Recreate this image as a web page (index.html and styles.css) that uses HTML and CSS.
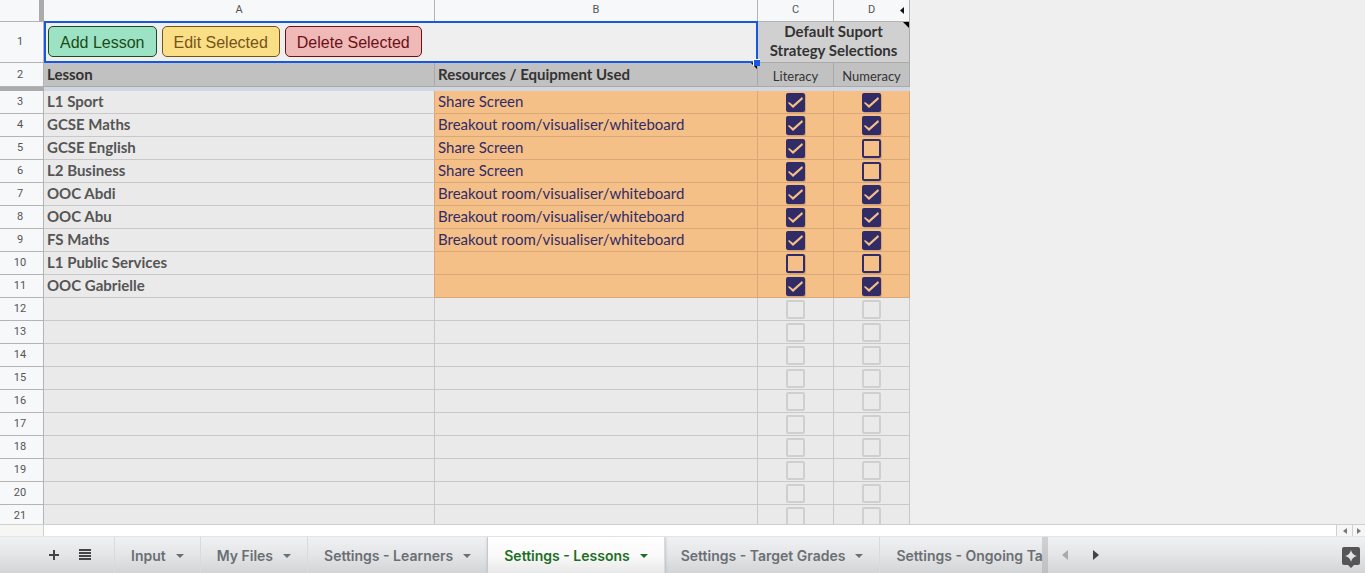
FILE: index.html
```
<!DOCTYPE html>
<html lang="en">
<head>
<meta charset="utf-8">
<title>Settings - Lessons</title>
<link rel="stylesheet" href="styles.css">
</head>
<body>
<main class="grid">
<table class="sheet">
<colgroup><col class="col-num"><col class="col-a"><col class="col-b"><col class="col-check"><col class="col-check"></colgroup>
<thead>
<tr class="letters"><td class="corner"></td><th scope="col">A</th><th scope="col">B</th><th scope="col">C</th><th scope="col" class="last-letter">D<svg class="collapse" viewBox="0 0 4 7" aria-hidden="true"><path d="M4 0v7L0 3.500z"/></svg></th></tr>
<tr class="toolbar-row"><th scope="row" class="num">1</th>
<td colspan="2" class="selected"><div class="actions"><button type="button" class="btn add">Add Lesson</button><button type="button" class="btn edit">Edit Selected</button><button type="button" class="btn delete">Delete Selected</button></div><span class="handle"></span></td>
<th colspan="2" class="strategy note">Default Suport<br>Strategy Selections</th></tr>
<tr class="headings"><th scope="row" class="num">2</th><th>Lesson</th><th class="note">Resources / Equipment Used</th><th class="sub">Literacy</th><th class="sub">Numeracy</th></tr>
<tr class="freeze"><td class="freeze-num"></td><td colspan="4" class="freeze-line"></td></tr>
</thead>
<tbody class="filled">
<tr><th scope="row" class="num">3</th><td>L1 Sport</td><td>Share Screen</td><td><input type="checkbox" aria-label="L1 Sport literacy" checked></td><td><input type="checkbox" aria-label="L1 Sport numeracy" checked></td></tr>
<tr><th scope="row" class="num">4</th><td>GCSE Maths</td><td>Breakout room/visualiser/whiteboard</td><td><input type="checkbox" aria-label="GCSE Maths literacy" checked></td><td><input type="checkbox" aria-label="GCSE Maths numeracy" checked></td></tr>
<tr><th scope="row" class="num">5</th><td>GCSE English</td><td>Share Screen</td><td><input type="checkbox" aria-label="GCSE English literacy" checked></td><td><input type="checkbox" aria-label="GCSE English numeracy"></td></tr>
<tr><th scope="row" class="num">6</th><td>L2 Business</td><td>Share Screen</td><td><input type="checkbox" aria-label="L2 Business literacy" checked></td><td><input type="checkbox" aria-label="L2 Business numeracy"></td></tr>
<tr><th scope="row" class="num">7</th><td>OOC Abdi</td><td>Breakout room/visualiser/whiteboard</td><td><input type="checkbox" aria-label="OOC Abdi literacy" checked></td><td><input type="checkbox" aria-label="OOC Abdi numeracy" checked></td></tr>
<tr><th scope="row" class="num">8</th><td>OOC Abu</td><td>Breakout room/visualiser/whiteboard</td><td><input type="checkbox" aria-label="OOC Abu literacy" checked></td><td><input type="checkbox" aria-label="OOC Abu numeracy" checked></td></tr>
<tr><th scope="row" class="num">9</th><td>FS Maths</td><td>Breakout room/visualiser/whiteboard</td><td><input type="checkbox" aria-label="FS Maths literacy" checked></td><td><input type="checkbox" aria-label="FS Maths numeracy" checked></td></tr>
<tr><th scope="row" class="num">10</th><td>L1 Public Services</td><td></td><td><input type="checkbox" aria-label="L1 Public Services literacy"></td><td><input type="checkbox" aria-label="L1 Public Services numeracy"></td></tr>
<tr><th scope="row" class="num">11</th><td>OOC Gabrielle</td><td></td><td><input type="checkbox" aria-label="OOC Gabrielle literacy" checked></td><td><input type="checkbox" aria-label="OOC Gabrielle numeracy" checked></td></tr>
</tbody>
<tbody class="empty">
<tr><th scope="row" class="num">12</th><td></td><td></td><td><input type="checkbox" aria-label="Row 12 literacy"></td><td><input type="checkbox" aria-label="Row 12 numeracy"></td></tr>
<tr><th scope="row" class="num">13</th><td></td><td></td><td><input type="checkbox" aria-label="Row 13 literacy"></td><td><input type="checkbox" aria-label="Row 13 numeracy"></td></tr>
<tr><th scope="row" class="num">14</th><td></td><td></td><td><input type="checkbox" aria-label="Row 14 literacy"></td><td><input type="checkbox" aria-label="Row 14 numeracy"></td></tr>
<tr><th scope="row" class="num">15</th><td></td><td></td><td><input type="checkbox" aria-label="Row 15 literacy"></td><td><input type="checkbox" aria-label="Row 15 numeracy"></td></tr>
<tr><th scope="row" class="num">16</th><td></td><td></td><td><input type="checkbox" aria-label="Row 16 literacy"></td><td><input type="checkbox" aria-label="Row 16 numeracy"></td></tr>
<tr><th scope="row" class="num">17</th><td></td><td></td><td><input type="checkbox" aria-label="Row 17 literacy"></td><td><input type="checkbox" aria-label="Row 17 numeracy"></td></tr>
<tr><th scope="row" class="num">18</th><td></td><td></td><td><input type="checkbox" aria-label="Row 18 literacy"></td><td><input type="checkbox" aria-label="Row 18 numeracy"></td></tr>
<tr><th scope="row" class="num">19</th><td></td><td></td><td><input type="checkbox" aria-label="Row 19 literacy"></td><td><input type="checkbox" aria-label="Row 19 numeracy"></td></tr>
<tr><th scope="row" class="num">20</th><td></td><td></td><td><input type="checkbox" aria-label="Row 20 literacy"></td><td><input type="checkbox" aria-label="Row 20 numeracy"></td></tr>
<tr><th scope="row" class="num">21</th><td></td><td></td><td><input type="checkbox" aria-label="Row 21 literacy"></td><td><input type="checkbox" aria-label="Row 21 numeracy"></td></tr>
</tbody>
</table>
</main>
<div class="hscroll">
<span class="hscroll-corner"></span><span class="track"></span>
<button type="button" class="step" aria-label="Scroll left"><svg width="4" height="6" viewBox="0 0 4 6"><path d="M4 0v6L0 3z"/></svg></button>
<button type="button" class="step" aria-label="Scroll right"><svg width="4" height="6" viewBox="0 0 4 6"><path d="M0 0v6L4 3z"/></svg></button>
</div>
<footer class="bar">
<div class="sheet-tools">
<button type="button" class="icon" aria-label="Add sheet"><svg width="12" height="12" viewBox="0 0 12 12"><path d="M5 1h2v4h4v2H7v4H5V7H1V5h4z"/></svg></button>
<button type="button" class="icon" aria-label="All sheets"><svg width="12" height="12" viewBox="0 0 12 12"><path d="M0 0h12v2H0zM0 3h12v2H0zM0 6h12v2H0zM0 9h12v2H0z"/></svg></button>
</div>
<nav class="tabs">
<button type="button" class="tab">Input<span class="caret"></span></button>
<button type="button" class="tab">My Files<span class="caret"></span></button>
<button type="button" class="tab">Settings - Learners<span class="caret"></span></button>
<button type="button" class="tab active">Settings - Lessons<span class="caret"></span></button>
<button type="button" class="tab">Settings - Target Grades<span class="caret"></span></button>
<button type="button" class="tab">Settings - Ongoing Ta</button>
</nav>
<div class="pager">
<button type="button" class="icon off" aria-label="Previous tabs"><svg width="6" height="10" viewBox="0 0 6 10"><path d="M6 0v10L0 5z"/></svg></button>
<button type="button" class="icon" aria-label="Next tabs"><svg width="6" height="10" viewBox="0 0 6 10"><path d="M0 0v10l6-5z"/></svg></button>
<button type="button" class="icon explore" aria-label="Explore"><svg width="18" height="21" viewBox="0 0 18 21"><path fill-rule="evenodd" d="M2 0h14q2 0 2 2v14q0 2-2 2h-4l-3 3-3-3H2q-2 0-2-2V2q0-2 2-2zM9 3Q10 8 15 9 10 10 9 15 8 10 3 9 8 8 9 3z"/></svg></button>
</div>
</footer>
</body>
</html>
```
FILE: styles.css
```
* { box-sizing: border-box; }
body {
  margin: 0;
  height: 100vh;
  display: flex;
  flex-direction: column;
  overflow: hidden;
  background: #efefef;
  font-family: Lato, sans-serif;
}
button { font: inherit; border: 0; padding: 0; background: none; }

.grid { flex: 1; min-height: 0; overflow: hidden; }
.sheet {
  width: 910px;
  table-layout: fixed;
  border-collapse: separate;
  border-spacing: 0;
  font-size: 15px;
  line-height: 20px;
}
.col-num { width: 44px; }
.col-a { width: 391px; }
.col-b { width: 323px; }
.col-check { width: 76px; }
.sheet th, .sheet td {
  height: 23px;
  padding: 0 3px 2px;
  text-align: left;
  white-space: nowrap;
  border-right: 1px solid #c8c8c8;
  border-bottom: 1px solid #c8c8c8;
}
.sheet .letters th, .sheet .letters td, .sheet .num {
  background: #f6f8fa;
  color: #555;
  font: 11px/14px Roboto, sans-serif;
  text-align: center;
  border-color: #b4b4b4;
}
.sheet .letters th, .sheet .letters td { height: 22px; }
.sheet .letters .corner { border-right: 5px solid #ababab; }
.sheet .num { padding: 0 6px 0 3px; }
.last-letter { position: relative; }
.collapse { position: absolute; right: 5px; top: 7px; width: 4px; height: 7px; fill: #111; }

.sheet .toolbar-row > * { height: 41px; }
.sheet .selected { position: relative; padding: 0 4px 1px; background: #efefef; }
.selected::after {
  content: "";
  position: absolute;
  inset: -1px -1px -1px 0;
  border: 2px solid #1659df;
  pointer-events: none;
}
.handle {
  position: absolute;
  z-index: 1;
  right: -3px;
  bottom: -4px;
  width: 7px;
  height: 7px;
  background: #1659df;
  border: solid #fff;
  border-width: 1px 0 0 1px;
}
.actions { display: flex; gap: 5px; }
.btn {
  height: 31px;
  padding: 2px 11px 0;
  border: 1px solid;
  border-radius: 5px;
  font: 16px/20px "Liberation Sans", Arial, sans-serif;
}
.add { background: #9be3c4; color: #1d4a16; }
.edit { background: #fbdf87; color: #75541a; }
.delete { background: #efb9b7; color: #6b1015; }

.sheet .strategy {
  background: #d0d0d0;
  color: #333;
  line-height: 19px;
  text-align: center;
  border-color: #aaa;
}
.note { position: relative; }
.note::before {
  content: "";
  position: absolute;
  top: 0;
  right: 0;
  border-top: 6px solid #000;
  border-left: 6px solid transparent;
}
.sheet .headings > th { height: 24px; }
.sheet .headings > th:not(.num) { background: #c1c1c1; color: #333; border-color: #a9a9a9; }
.sheet .headings > .sub { padding: 3px 0 0; font-size: 13px; font-weight: 400; text-align: center; }
.sheet .freeze td { height: 4px; border: 0; padding: 0; }
.freeze-num { background: #ababab; }
.freeze-line { background: #d1d6e3; }

.filled td { background: #f5bf88; color: #312c66; }
.sheet .filled td { border-color: #d9a878; }
.sheet .filled td:nth-child(2) { background: #eaeaea; color: #555; font-weight: 700; border-bottom-color: #c8c8c8; }
.empty td { background: #eaeaea; }
.sheet tbody td:nth-child(n+4) { padding-bottom: 0; text-align: center; line-height: 0; }
.sheet .filled td:last-child { border-right-color: #d0a77f; }
input {
  appearance: none;
  width: 19px;
  height: 19px;
  margin: 1px 0 0;
  border: 2px solid #312c66;
  border-radius: 2px;
  vertical-align: top;
  box-shadow: 1px 1px 0 #d3a27d;
}
.empty input { border-color: #cfcfcf; box-shadow: none; }
input:checked { background: #312c66; }
input:checked::before {
  content: "";
  display: block;
  width: 15px;
  height: 15px;
  background: #f5bf88;
  clip-path: polygon(0 8px, 1px 7px, 5px 10px, 14px 2px, 15px 4px, 5px 13px);
}

.hscroll { display: flex; height: 13px; border: solid #cfcfcf; border-width: 1px 0; border-bottom-color: #e2e3e6; background: #fff; }
.hscroll-corner { width: 44px; background: #f6f6f5; border-right: 1px solid #d0d0d0; }
.track { flex: 1; }
.step { width: 16px; display: flex; align-items: center; justify-content: center; background: #f6f6f6; border-left: 1px solid #d0d0d0; fill: #777; }
.step:last-child { width: 13px; }

.bar { display: flex; height: 36px; background: linear-gradient(#f0f1f3, #e4e5e7 50%, #d3d4d6); }
.icon { display: flex; fill: #444; }
.sheet-tools { display: flex; align-items: center; gap: 19px; width: 114px; padding-left: 48px; }
.tabs {
  position: relative;
  flex: 1;
  min-width: 0;
  display: flex;
  overflow: hidden;
  border-left: 1px solid #d9dadd;
}
.tabs::after {
  content: "";
  position: absolute;
  inset: 0 0 0 auto;
  width: 6px;
  background: rgb(160 160 160 / 40%);
}
.tab {
  flex: none;
  display: flex;
  align-items: center;
  gap: 10px;
  padding: 1px 16px 0;
  border-right: 1px solid #d9dadd;
  color: #6a6f74;
  font: 600 14px/20px Inter, sans-serif;
}
.tab:last-child { padding-right: 0; border: 0; }
.active { background: linear-gradient(#fff, #fafafa 50%, #e8e8e8); color: #1c6e24; box-shadow: 0 0 3px #aaa; }
.caret { border: 4px solid transparent; border-top-color: currentColor; border-bottom: 0; }
.pager { display: flex; align-items: center; gap: 25px; width: 317px; padding: 0 5px 0 14px; }
.off { fill: #aaa; }
.explore { margin-left: auto; padding-top: 4px; fill: #555; }
```
